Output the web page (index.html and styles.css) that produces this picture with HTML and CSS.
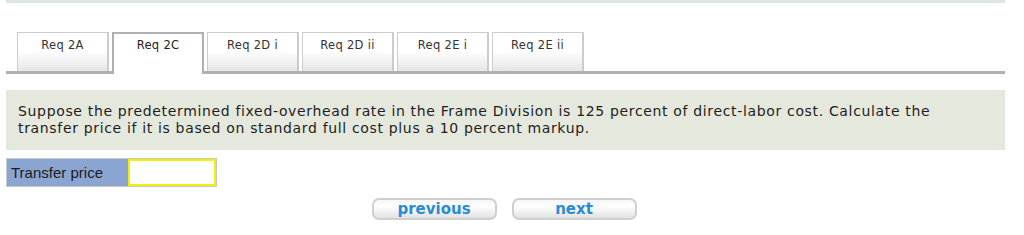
FILE: index.html
```html
<!DOCTYPE html>
<html lang="en">
<head>
    <meta charset="UTF-8">
    <title>Req 2C</title>
    <link rel="stylesheet" href="styles.css">
</head>
<body>
    <div class="page">
        <div class="topbar"></div>

        <div class="tabs">
            <div class="tab">Req 2A</div>
            <div class="tab active">Req 2C</div>
            <div class="tab">Req 2D i</div>
            <div class="tab">Req 2D ii</div>
            <div class="tab">Req 2E i</div>
            <div class="tab">Req 2E ii</div>
        </div>

        <div class="question">
            Suppose the predetermined fixed-overhead rate in the Frame Division is 125 percent of direct-labor cost. Calculate the transfer price if it is based on standard full cost plus a 10 percent markup.
        </div>

        <div class="answer-row">
            <div class="answer-label">Transfer price</div>
            <input class="answer-input" type="text">
        </div>

        <div class="nav">
            <button class="nav-btn">previous</button>
            <button class="nav-btn">next</button>
        </div>
    </div>
</body>
</html>
```

FILE: styles.css
```css
* {
    margin: 0;
    padding: 0;
    box-sizing: border-box;
}

body {
    background-color: #ffffff;
    font-family: 'DejaVu Sans', Verdana, sans-serif;
    color: #222222;
}

.page {
    width: 999px;
    margin-left: 6px;
}

.topbar {
    height: 3px;
    background-color: #dde4e6;
    margin-bottom: 29px;
}

/* Tabs */
.tabs {
    display: flex;
    gap: 3px;
    padding-left: 11px;
    border-bottom: 3px solid #b0b0b0;
    height: 42px;
}

.tab {
    width: 92px;
    height: 39px;
    padding-top: 5px;
    text-align: center;
    font-size: 11.5px;
    letter-spacing: 0.3px;
    color: #333333;
    border: 1px solid #cccccc;
    border-right-width: 2px;
    border-bottom: none;
    background: linear-gradient(to bottom, #ffffff 0%, #ffffff 45%, #e6e6e6 100%);
}

.tab.active {
    height: 42px;
    border: 2px solid #b0b0b0;
    border-bottom: none;
    background: #ffffff;
    padding-top: 4px;
    margin-bottom: -3px;
    color: #222222;
}

/* Question */
.question {
    margin-top: 16px;
    padding: 13px 12px;
    background-color: #e5e8dc;
    font-size: 14px;
    line-height: 17px;
    letter-spacing: 0.66px;
    color: #1e1e1e;
}

/* Answer */
.answer-row {
    display: flex;
    width: 211px;
    height: 29px;
    margin-top: 8px;
    border: 1px solid #c8c8c8;
}

.answer-label {
    width: 121px;
    background-color: #8ba5d3;
    font-family: 'Liberation Sans', Arial, sans-serif;
    font-size: 15px;
    line-height: 27px;
    padding-left: 4px;
    color: #1c1c1c;
}

.answer-input {
    width: 88px;
    height: 27px;
    border: 2px solid #f5f000;
    background: #ffffff;
    outline: none;
}

/* Navigation */
.nav {
    display: flex;
    justify-content: center;
    gap: 15px;
    margin-top: 11px;
    padding-right: 3px;
}

.nav-btn {
    width: 125px;
    height: 22px;
    border: 2px solid #cfcfcf;
    border-radius: 7px;
    background: linear-gradient(to bottom, #f6f6f6 0%, #ffffff 35%, #e2e2e2 100%);
    font-family: 'DejaVu Sans', Verdana, sans-serif;
    font-weight: bold;
    font-size: 15px;
    line-height: 17px;
    color: #2a8ad8;
    cursor: pointer;
}
```
